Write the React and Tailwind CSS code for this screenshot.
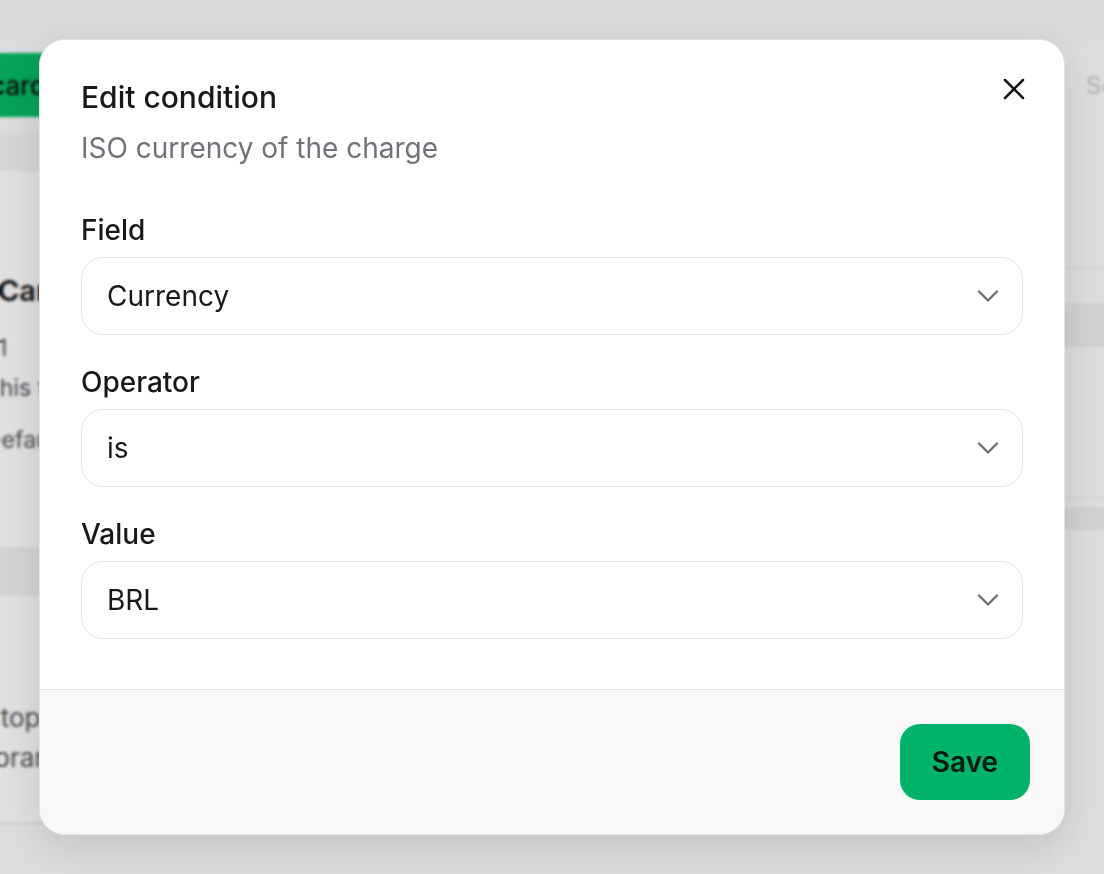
import { X, ChevronDown } from 'lucide-react';

const fields = [
  { label: 'Field', value: 'Currency' },
  { label: 'Operator', value: 'is' },
  { label: 'Value', value: 'BRL' },
];

function SelectBox({ value }) {
  return (
    <button
      type="button"
      className="mt-[9px] flex h-[78px] w-full items-center justify-between rounded-[22px] border-[1.5px] border-[#e5e5e7] bg-white pl-[25px] pr-[16px] text-left text-[28px] text-[#18181b]"
    >
      <span>{value}</span>
      <ChevronDown size={36} strokeWidth={2.4} absoluteStrokeWidth className="text-[#6b6f76]" />
    </button>
  );
}

function BackgroundPage() {
  return (
    <div className="flex h-[874px] w-[1104px] flex-col bg-[#fafbfc] font-['Inter',sans-serif]">
      <div className="h-[46px] shrink-0 bg-[#f9fafb]" />
      <div className="flex flex-1 justify-between">
        {/* left column, mostly hidden by the dialog */}
        <div className="flex w-[52px] flex-col overflow-hidden">
          <div className="mt-[7px] flex h-[64px] items-center justify-end whitespace-nowrap bg-[#07ba66] pr-[6px] text-[26px] font-medium text-[#101010]">
            Add card
          </div>
          <div className="mt-[16px] h-[38px] bg-[#f2f3f4]" />
          <div className="flex h-[376px] flex-col bg-white">
            <div className="-ml-[2px] mt-[100px] whitespace-nowrap text-[29px] font-semibold leading-[40px] text-[#161616]">
              Card
            </div>
            <div className="-ml-[15px] flex flex-col whitespace-nowrap text-[23px] leading-[30px] text-[#55575c]">
              <span className="mt-[22px]">v1</span>
              <span className="mt-[10px]">This flow</span>
              <span className="mt-[22px]">Default</span>
            </div>
          </div>
          <div className="h-[49px] bg-[#f1f2f3]" />
          <div className="-ml-[16px] flex h-[228px] flex-col whitespace-nowrap border-b border-[#d9dadc] bg-white text-[26px] leading-[34px] text-[#55575c]">
            <span className="mt-[105px]">Stop</span>
            <span className="-ml-[11px] mt-[6px]">Library</span>
          </div>
        </div>
        {/* right column */}
        <div className="flex w-[52px] flex-col overflow-hidden bg-[#fcfcfd]">
          <div className="mt-[24px] whitespace-nowrap pl-[34px] text-[24px] leading-[32px] text-[#c9cacc]">Search</div>
          <div className="mt-[165px] h-[1px] bg-[#e6e8ea]" />
          <div className="mt-[35px] h-[44px] bg-[#eeeff1]" />
          <div className="mt-[150px] h-[1px] bg-[#e6e8ea]" />
          <div className="mt-[9px] h-[23px] bg-[#eeeff1]" />
        </div>
      </div>
    </div>
  );
}

export default function App() {
  return (
    <div className="relative h-[874px] w-[1104px] overflow-hidden font-['Inter',sans-serif]">
      <BackgroundPage />

      {/* overlay */}
      <div className="absolute inset-0 bg-black/[0.12] backdrop-blur-[1.5px]" />

      {/* dialog */}
      <div className="absolute inset-0 flex items-center justify-center">
        <div className="relative w-[1026px] overflow-hidden rounded-[26px] border border-[#e4e4e7] bg-white shadow-[0_10px_40px_rgba(0,0,0,0.12)]">
          <button
            type="button"
            aria-label="Close"
            className="absolute right-[32px] top-[31px] text-[#161616]"
          >
            <X size={36} strokeWidth={2.5} absoluteStrokeWidth />
          </button>

          <div className="px-[41px] pb-[50px] pt-[39px]">
            <h2 className="text-[30px] font-medium leading-[36px] text-[#18181b]">Edit condition</h2>
            <p className="mt-[15px] text-[28px] leading-[36px] text-[#71727a]">
              ISO currency of the charge
            </p>

            <div className="mt-[46px] flex flex-col gap-[29px]">
              {fields.map((f) => (
                <div key={f.label} className="flex flex-col">
                  <label className="text-[28px] font-medium leading-[36px] text-[#18181b]">{f.label}</label>
                  <SelectBox value={f.value} />
                </div>
              ))}
            </div>
          </div>

          <div className="flex justify-end border-t border-[#e4e4e7] bg-[#f8f8f8] px-[34px] py-[34px]">
            <button
              type="button"
              className="h-[76px] w-[130px] rounded-[20px] bg-[#00b36a] text-[28px] font-semibold text-[#0c1a12]"
            >
              Save
            </button>
          </div>
        </div>
      </div>
    </div>
  );
}
